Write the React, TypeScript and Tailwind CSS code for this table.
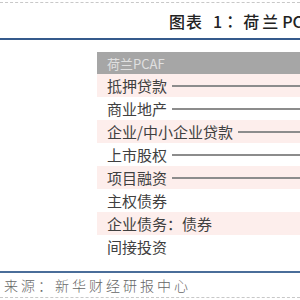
import React from "react";

const rows: { label: string; line: boolean }[] = [
  { label: "抵押贷款", line: true },
  { label: "商业地产", line: true },
  { label: "企业/中小企业贷款", line: true },
  { label: "上市股权", line: true },
  { label: "项目融资", line: true },
  { label: "主权债券", line: false },
  { label: "企业债务：债券", line: false },
  { label: "间接投资", line: false },
];

const font = { fontFamily: '"Noto Sans CJK SC", "Noto Sans", sans-serif' };

export default function App() {
  return (
    <div className="w-[300px] h-[300px] overflow-hidden bg-white flex flex-col" style={font}>
      <div className="mt-[2px] h-0 border-t border-dashed border-[#c8c8c8]" />
      <div className="h-[35px] flex items-center pl-[169px] whitespace-nowrap text-[16px] leading-[16px] text-[#222] font-medium overflow-hidden">
        <span className="tracking-[1px]">图表</span>
        <span className="ml-[10px]">1</span>
        <span style={{ fontFamily: '"Noto Sans CJK JP", sans-serif' }}>：</span>
        <span className="ml-[5px] tracking-[3px]">荷兰</span>
        <span className="ml-[1px]">PCAF</span>
      </div>
      <div className="h-[2px] bg-[#355a8c]" />
      <div className="h-[12px]" />
      <div className="ml-[97px] flex flex-col">
        <div className="h-[22px] bg-[#a6a6a6] flex items-center pl-[10px] text-[13px] leading-[13px] text-[#e0e0e0] whitespace-nowrap">
          荷兰PCAF
        </div>
        {rows.map((r, i) => (
          <div
            key={r.label}
            className={`h-[23px] flex items-center pl-[10px] whitespace-nowrap ${i % 2 === 0 ? "bg-[#fdeeec]" : "bg-white"}`}
          >
            <span className="text-[15px] leading-[15px] text-[#404040]">{r.label}</span>
            {r.line && <div className="ml-[5px] flex-1 h-[2px] bg-[#8c8c8c]" />}
          </div>
        ))}
      </div>
      <div className="h-[13px]" />
      <div className="h-[2px] bg-[#4a6d99]" />
      <div className="h-[24px] flex items-center pl-[4px] whitespace-nowrap text-[14px] leading-[14px] tracking-[3px] text-[#666] font-light">
        来源：新华财经研报中心
      </div>
      <div className="h-0 border-t border-dashed border-[#c8c8c8]" />
    </div>
  );
}
